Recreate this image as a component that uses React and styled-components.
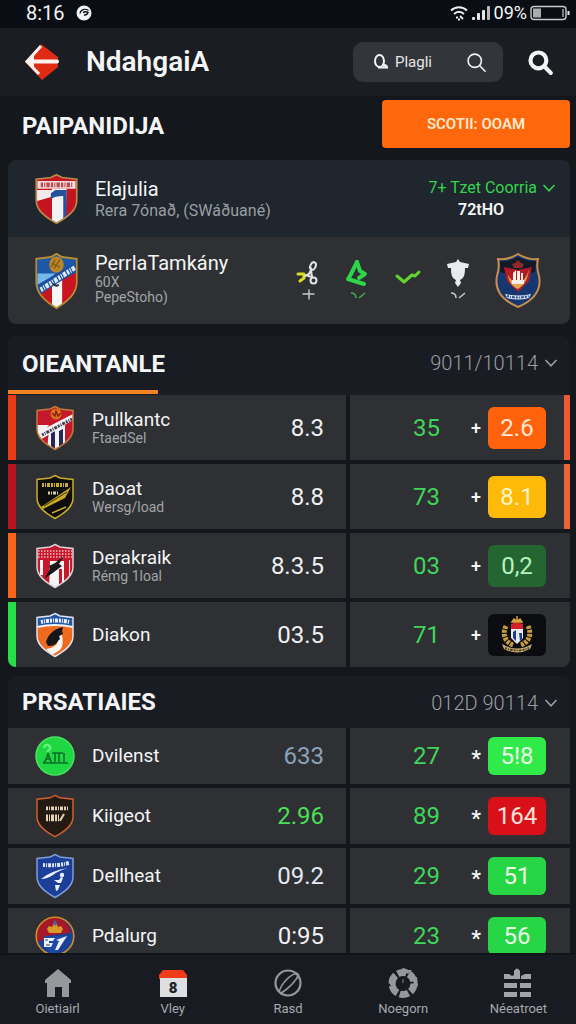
import React from "react";
import styled, { createGlobalStyle, css } from "styled-components";

const GlobalStyle = createGlobalStyle`
  * { box-sizing: border-box; }
  body { margin: 0; background: #14171c; color: #f4f5f6; font-family: Roboto, "Liberation Sans", sans-serif; }
  h1, h2, p, ul { margin: 0; padding: 0; }
  ul { list-style: none; }
  button, input { font: inherit; color: inherit; border: 0; padding: 0; background: none; }
  button { cursor: pointer; }
  svg { display: block; flex: none; }
`;

const Screen = styled.div`
  display: flex;
  flex-direction: column;
  height: 100vh;
`;

const StatusBar = styled.div`
  display: flex;
  align-items: center;
  height: 28px;
  flex: none;
  padding: 0 6px 2px 26px;
  background: #0a0d13;
  font-size: 20px;
  line-height: 24px;
`;

const StatusGroup = styled.div`
  display: flex;
  align-items: center;
  gap: ${(p) => p.$gap}px;
  margin-left: ${(p) => (p.$end ? "auto" : "0")};
`;

const Percent = styled.span`
  font-size: 18px;
`;

const Header = styled.header`
  display: flex;
  align-items: center;
  height: 69px;
  flex: none;
  padding: 0 23px 0 24px;
  background: #1a1d22;
  border-bottom: 1px solid #121418;
`;

const BackLink = styled.a`
  display: block;
  margin-right: 26px;
`;

const AppTitle = styled.h1`
  flex: 1;
  font-size: 28px;
  line-height: 32px;
  font-weight: 600;
`;

const SearchField = styled.label`
  display: flex;
  align-items: center;
  width: 150px;
  height: 40px;
  padding: 0 16px 0 20px;
  gap: 6px;
  border-radius: 10px;
  background: #33353a;
`;

const SearchInput = styled.input`
  flex: 1;
  min-width: 0;
  font-size: 15px;
  line-height: 20px;
  outline: none;
  &::placeholder { color: #e6e7e9; opacity: 1; }
`;

const IconButton = styled.button`
  margin-left: 25px;
`;

const Main = styled.main`
  flex: 1;
  min-height: 0;
  overflow-y: auto;
  scrollbar-width: none;
  padding: 0 6px 0 8px;
`;

const TitleBar = styled.div`
  display: flex;
  align-items: center;
  justify-content: space-between;
  height: 54px;
  margin-bottom: 9px;
  padding-left: 14px;
`;

const SectionTitle = styled.h2`
  padding-top: 3px;
  font-size: 24px;
  line-height: 28px;
  font-weight: 700;
`;

const ActionButton = styled.button`
  width: 188px;
  height: 48px;
  border-radius: 4px;
  background: #ff670c;
  color: #ffe9cf;
  font-size: 15px;
  font-weight: 600;
`;

const Card = styled.section`
  margin-bottom: 12px;
  border-radius: 8px;
  overflow: hidden;
`;

const MatchRow = styled.div`
  display: flex;
  align-items: center;
  gap: 16px;
  height: ${(p) => (p.$tall ? 87 : 77)}px;
  padding: 0 14px 0 26px;
  background: ${(p) => (p.$tall ? "#2e3034" : "#1f262d")};
  ${(p) => p.$tall && css`padding-right: 29px;`}
`;

const TeamText = styled.div`
  flex: 1;
  min-width: 0;
  padding-bottom: ${(p) => (p.$raised ? 6 : 0)}px;
`;

const CardName = styled.p`
  font-size: 20px;
  line-height: 24px;
`;

const CardNote = styled.p`
  font-size: 16px;
  line-height: 20px;
  color: #9a9ea3;
`;

const SmallNote = styled.p`
  font-size: 14px;
  line-height: 15px;
  color: #a2a4a8;
`;

const Meta = styled.div`
  display: flex;
  flex-direction: column;
  align-items: flex-end;
`;

const MetaButton = styled.button`
  display: flex;
  align-items: center;
  gap: 5px;
  font-size: 16px;
  line-height: 22px;
  color: #35d450;
`;

const MetaValue = styled.p`
  padding-right: 52px;
  font-size: 16px;
  line-height: 22px;
  font-weight: 600;
`;

const EventList = styled.ul`
  display: flex;
  margin-right: -4px;
`;

const EventItem = styled.li`
  display: flex;
  justify-content: center;
  width: 50px;
`;

const Section = styled.section`
  margin-bottom: 9px;
  border-radius: 8px;
  overflow: hidden;
`;

const SectionHead = styled.div`
  display: flex;
  justify-content: space-between;
  height: ${(p) => (p.$active ? 59 : 52)}px;
  padding: 0 12px 0 0;
  background: #191c23;
`;

const TitleTab = styled.div`
  width: 150px;
  white-space: nowrap;
  padding: ${(p) => (p.$active ? 11 : 9)}px 0 0 14px;
  ${(p) => p.$active && css`
    border-bottom: 4px solid #f28222;
    margin-bottom: 1px;
  `}
`;

const DateButton = styled.button`
  display: flex;
  align-items: center;
  gap: 6px;
  height: 54px;
  font-size: 20px;
  font-weight: 300;
  color: #9c9ea3;
`;

const Table = styled.table`
  display: block;
`;

const Rows = styled.tbody`
  display: grid;
  gap: 4px;
`;

const Row = styled.tr`
  display: grid;
  grid-template-columns: minmax(0, 1fr) 84px 94px 44px 86px;
  height: ${(p) => (p.$tall ? 65 : 56)}px;
`;

const Cell = styled.td`
  display: flex;
  align-items: center;
  padding: 0;
  background: #2e3034;
  font-size: 24px;
  line-height: 28px;
`;

const TeamCell = styled(Cell)`
  gap: 17px;
  padding-left: ${(p) => (p.$bar ? 19 : 27)}px;
  ${(p) => p.$bar && css`border-left: 8px solid ${p.$bar};`}
`;

const ValueCell = styled(Cell)`
  justify-content: flex-end;
  padding-right: 22px;
  color: ${(p) => p.$color || "#f0f1f2"};
`;

const CountCell = styled(Cell)`
  justify-content: flex-end;
  margin-left: 4px;
  color: #3fd65a;
`;

const SignCell = styled(Cell)`
  justify-content: flex-end;
  padding: ${(p) => (p.$low ? 6 : 0)}px 3px 0 0;
  font-size: ${(p) => (p.$low ? 22 : 18)}px;
  font-weight: 500;
`;

const BadgeCell = styled(Cell)`
  padding-left: 4px;
  ${(p) => p.$bar && css`border-right: 6px solid ${p.$bar};`}
`;

const Badge = styled.span`
  display: flex;
  align-items: center;
  justify-content: center;
  width: 58px;
  height: ${(p) => (p.$tall ? 42 : 38)}px;
  border-radius: 6px;
  background: ${(p) => p.$color};
  color: ${(p) => p.$ink || "#eafbe6"};
`;

const TeamName = styled.p`
  font-size: 19px;
  line-height: 22px;
`;

const TabBar = styled.nav`
  display: grid;
  grid-template-columns: repeat(5, 1fr);
  flex: none;
  height: 71px;
  border-top: 2px solid #111419;
  background: #181b21;
`;

const Tab = styled.a`
  display: flex;
  flex-direction: column;
  align-items: center;
  gap: 2px;
  padding-top: 13px;
  font-size: 13px;
  line-height: 18px;
  color: #a6a9ad;
  text-decoration: none;
`;

const TabIcon = styled.span`
  display: flex;
  align-items: center;
  height: 30px;
`;

/* ---------- icons ---------- */

const Chevron = ({ color = "currentColor" }) => (
  <svg width="14" height="10" viewBox="0 0 14 10" fill="none" stroke={color} strokeWidth="1.6">
    <path d="M1.5 2 7 7.800 12.500 2" />
  </svg>
);

const SearchIcon = ({ size, weight }) => (
  <svg width={size} height={size} viewBox="0 0 24 24" fill="none" stroke="currentColor" strokeWidth={weight} strokeLinecap="round">
    <circle cx="10" cy="10" r="7.600" />
    <path d="m15.800 15.800 6 6.200" />
  </svg>
);

const StatusIcon = () => (
  <svg width="16" height="18" viewBox="0 0 16 18">
    <circle cx="8" cy="9" r="7.500" fill="#f2f3f4" />
    <path d="M12.500 6.500C9 4 4.500 5.500 4 9.500" fill="none" stroke="#0a0d13" strokeWidth="1.200" />
    <path d="M7 8.500q3-1.500 5 0-1 3-4 2.500" fill="none" stroke="#0a0d13" strokeWidth="1.400" />
  </svg>
);

const Wifi = () => (
  <svg width="18" height="16" viewBox="0 0 18 16" fill="none" stroke="#eceded">
    <path d="M1 5.500C5.500 1 12.500 1 17 5.500" strokeWidth="2" />
    <path d="M4 9c3-3 7-3 10 0" strokeWidth="1.800" />
    <path d="M6 12.500h2M10 11l3 3M8 14.500h2" strokeWidth="1.800" />
  </svg>
);

const Signal = () => (
  <svg width="20" height="16" viewBox="0 0 20 16" fill="#e6e7e8">
    <rect x="1" y="12" width="3" height="3" rx="1" />
    <rect x="6" y="8" width="3" height="7" rx="1" />
    <rect x="11" y="5" width="3" height="10" rx="1" />
    <rect x="16" y="1" width="3" height="14" rx="1" fill="#b9babc" />
  </svg>
);

const Battery = () => (
  <svg width="40" height="16" viewBox="0 0 40 16">
    <rect x="1" y="1.500" width="35" height="13" rx="3" fill="#0a0d13" stroke="#c9cacc" strokeWidth="1.400" />
    <rect x="3" y="3.500" width="8" height="9" fill="#a9abad" />
    <path d="M33 4v8" stroke="#c9cacc" strokeWidth="1.200" />
    <path d="M38.500 6v4" stroke="#e6e7e8" strokeWidth="2" />
  </svg>
);

const BackLogo = () => (
  <svg width="36" height="38" viewBox="0 0 36 38">
    <path d="M17 1 34 14v10L18 37 1 19Z" fill="#e02a14" />
    <path d="M33 18.500H8" fill="none" stroke="#fff3ee" strokeWidth="4" strokeLinecap="round" />
    <path d="M17 3 3 18.500 15 31" fill="none" stroke="#fff3ee" strokeWidth="3" />
    <path d="M1 18.500 10 12v13Z" fill="#fff3ee" />
  </svg>
);

const QueryMark = () => (
  <svg width="16" height="18" viewBox="0 0 16 18" fill="none" stroke="#f3f4f5">
    <ellipse cx="6.500" cy="8" rx="4.500" ry="6" strokeWidth="2" />
    <path d="M5 14.500h9c0-2-2-3-4-2" strokeWidth="2.200" />
  </svg>
);

const Injury = () => (
  <svg width="26" height="44" viewBox="0 0 26 44" fill="none" strokeLinecap="round">
    <path d="M3 15h6v4l-4 3" stroke="#d9dc25" strokeWidth="3" strokeLinejoin="round" />
    <ellipse cx="18" cy="7" rx="2.600" ry="4" stroke="#e2e3e5" strokeWidth="2" transform="rotate(25 18 7)" />
    <path d="m10 17 4-2 2-4 1 7-4-1" stroke="#e2e3e5" strokeWidth="2" />
    <circle cx="18.500" cy="21.500" r="3" stroke="#e2e3e5" strokeWidth="2" />
    <path d="M8 35h11M14 31v9" stroke="#c8cacc" strokeWidth="1.400" />
  </svg>
);

const Marks = ({ color }) => (
  <g fill="none" stroke={color} strokeWidth="1.600">
    <path d="M6 34c3 0 5 2 5 5M20 34l-6 5" />
  </g>
);

const Boot = () => (
  <svg width="26" height="44" viewBox="0 0 26 44">
    <path d="M12 3 5 17l-2 3 16 5" fill="none" stroke="#2fd64b" strokeWidth="4" strokeLinejoin="round" strokeLinecap="round" />
    <path d="M12 3l3 9 5 3-6 4" fill="none" stroke="#2fd64b" strokeWidth="4" strokeLinejoin="round" strokeLinecap="round" />
    <Marks color="#3fae52" />
  </svg>
);

const Tick = () => (
  <svg width="26" height="44" viewBox="0 0 26 44" fill="none" stroke="#62d52c" strokeWidth="3" strokeLinecap="round" strokeLinejoin="round">
    <path d="m2 17 7 6 8-7 3 1 4-4" />
  </svg>
);

const Trophy = () => (
  <svg width="26" height="44" viewBox="0 0 26 44">
    <path d="M13 0l2 3 9 2-1 4h-3c0 7-1 10-5 12l1 3-3 4-3-4 1-3c-4-2-5-5-5-12H3L2 5l9-2Z" fill="#e9eaeb" />
    <Marks color="#c4c6c8" />
  </svg>
);

const HomeIcon = () => (
  <svg width="28" height="28" viewBox="0 0 28 28" fill="#96999c">
    <path d="M14 0 27 11v3h-2v14h-7V18h-7v10H3V14H1v-3Z" />
  </svg>
);

const CalendarIcon = () => (
  <svg width="30" height="28" viewBox="0 0 30 28">
    <path d="M5 1h20l4 5v4H1V6Z" fill="#f03a1a" />
    <path d="M2 9h27v19H2Z" fill="#dddfe1" />
    <text x="15" y="24" textAnchor="middle" fontFamily="Roboto, sans-serif" fontWeight="900" fontSize="15" fill="#20242a">8</text>
  </svg>
);

const LeafIcon = () => (
  <svg width="28" height="28" viewBox="0 0 28 28" fill="none" stroke="#96999c">
    <circle cx="14" cy="14" r="12.500" strokeWidth="2.200" />
    <path d="M24 4C17 5 8 13 5 23" strokeWidth="1.400" />
    <path d="M25 5Q21 15 6 25" strokeWidth="1.800" />
  </svg>
);

const BallIcon = () => (
  <svg width="32" height="30" viewBox="0 0 32 30">
    <circle cx="16" cy="15.500" r="11" fill="none" stroke="#96999c" strokeWidth="7" strokeDasharray="9 2.500" />
    <path d="m14 1 3-1 4 2h4l-4 4ZM2 15l3-4 4 5-3 5ZM30 9l1 9-4 1-1-9Z" fill="#96999c" />
    <path d="M16 11v4" stroke="#5c6065" strokeWidth="1.500" />
  </svg>
);

const GridIcon = () => (
  <svg width="28" height="30" viewBox="0 0 28 30" fill="#a2a4a7">
    <path d="M0 6h5l3 2 2-1V3q3-5 6 0v8H0ZM17 8l4-2h6v5H17ZM0 15h13v5H0ZM16 15h11v5H16ZM0 24h13v5H0ZM16 24h11v5H16Z" />
  </svg>
);

/* ---------- club crests ---------- */

const SHIELD = "M20 1.500 25 4l13 1.500V24c0 9-8 15-18 20.500C10 39 2 33 2 24V5.500L15 4Z";

const Shield = ({ id, width = 40, height = 46, edge, children }) => (
  <svg width={width} height={height} viewBox="0 0 40 46" preserveAspectRatio="none">
    <clipPath id={id}><path d={SHIELD} /></clipPath>
    <g clipPath={`url(#${id})`}>{children}</g>
    <path d={SHIELD} fill="none" stroke={edge} strokeWidth="1.500" />
  </svg>
);

const Lettering = ({ d, color, width = 3 }) => (
  <path d={d} fill="none" stroke={color} strokeWidth={width} strokeDasharray="2 1 1 1 3 1" />
);

const Wreath = () => (
  <svg width="34" height="38" viewBox="0 0 34 38">
    <path d="M6 10c-4 8-1 16 7 19M28 10c4 8 1 16-7 19" fill="none" stroke="#c79a3c" strokeWidth="5" strokeDasharray="3 1" />
    <path d="M11 10q6-4 12 0v12l-6 6-6-6Z" fill="#e8e9ec" />
    <path d="M11 8q6-3 12 0v5H11Z" fill="#d3202a" />
    <path d="M13 16l3-2v11l-3-3ZM19 17h3v6l-2 2Z" fill="#1d3f86" />
    <path d="M12 6l2-3 3 2 3-2 2 3ZM17 0v5" fill="#d9a53c" stroke="#d9a53c" strokeWidth="1.500" />
    <path d="M2 28q15 9 30 0l-2 5q-13 7-26 0Z" fill="#cdb37a" />
    <Lettering d="M5 32q12 5 24 0" color="#4c3b1c" width={2} />
  </svg>
);

const crests = {
  elajulia: (
    <Shield id="c-ela" width={45} height={52} edge="#b98a4c">
      <path d="M0 0h40v46H0Z" fill="#c4141f" />
      <path d="M2 15h14v6L2 25Z" fill="#f2e9ea" />
      <path d="M16 14h13l-1 32H16Z" fill="#f3f3f6" />
      <path d="M15 18l4-3h10v5l-10 1-4 2ZM26 18l3-2v26l-3 2Z" fill="#24529c" />
      <path d="M3 7h34v7H3Z" fill="#f5dddd" />
      <Lettering d="M6 10.500h28" color="#bb4a50" width={4} />
    </Shield>
  ),
  tamkany: (
    <Shield id="c-tam" width={45} height={58} edge="#b88d34">
      <path d="M0 0h40v46H0Z" fill="#1d57a8" />
      <path d="M3 17h16L3 30Z" fill="#76b9e8" />
      <path d="M2 33 38 16v30H2Z" fill="#c8151f" />
      <path d="M16 25l9-5v26h-9Z" fill="#f5f5f6" />
      <circle cx="20" cy="10" r="6.500" fill="#b98425" />
      <path d="m16 9 7 3M18 13l5-7M15 12l4-6" stroke="#7d591b" strokeWidth="1" />
      <path d="m3 26 35-18v7L5 34Z" fill="#1c4f9f" />
      <Lettering d="m6 30 31-18" color="#dce8f5" width={4} />
      <path d="M17 25q2 3 5 1" stroke="#27262a" fill="none" strokeWidth="1.500" />
    </Shield>
  ),
  guest: (
    <svg width="46" height="55" viewBox="0 0 46 55">
      <path d="M23 1q9 6 20 5-2 8 1 17c3 15-7 25-21 31C9 48-1 38 2 23q3-9 1-17Q14 7 23 1Z" fill="#15366f" stroke="#c78e4d" strokeWidth="2" />
      <path d="M5 8q10 1 18-4 8 5 18 4l-1 11-17 5L5 19Z" fill="#151827" />
      <path d="m9 14 14 3 14-3-3 14-11 11-11-11Z" fill="#b21c25" />
      <path d="m17 11 3-1 3-3 3 3 3 1-2 4h-8Z" fill="#8c2a28" />
      <path d="M13 22c1 8 5 12 10 14 7-4 10-11 11-20-2 8-6 13-11 15-4-1-7-4-10-9Z" fill="#e1a44f" />
      <path d="M17 27h12v4H17ZM18 20l3-3v11h-3ZM22 18h3v12h-3ZM26 20h2v9h-2Z" fill="#f4eee6" />
      <path d="M10 41q13 3 26 0l-2 4q-11 3-22 0Z" fill="#dfe7f3" />
      <Lettering d="M12 43q11 3 22 0" color="#2c4f93" width={2} />
    </svg>
  ),
  pullkanta: (
    <Shield id="c-pul" edge="#c07a3c">
      <path d="M0 0h40v46H0Z" fill="#c5182a" />
      <path d="M0 20h14L3 34Z" fill="#f3eff0" />
      <path d="M14 24 30 18v28H12Z" fill="#f2f2f4" />
      <path d="M16 28l4-2v18l-4-3ZM24 26l4-2v17l-4 3Z" fill="#262a52" />
      <circle cx="21" cy="9" r="5.500" fill="#d7731b" />
      <path d="m17 8 3 3 1-5 2 5 3-3" fill="none" stroke="#8c1b18" strokeWidth="1.300" />
      <path d="m3 27 35-18v6L5 35Z" fill="#f6f2f3" />
      <Lettering d="m7 30 30-16" color="#444356" width={3} />
    </Shield>
  ),
  daoat: (
    <Shield id="c-dao" edge="#c9ad28">
      <path d="M0 0h40v46H0Z" fill="#0c0d0c" />
      <Lettering d="M7 11h27" color="#c9ad28" width={4} />
      <path d="m6 33 30-20-6 11L8 35Z" fill="#c9a71e" />
      <path d="m9 32 23-14" stroke="#3a320c" strokeWidth="1" />
      <Lettering d="M13 19h10" color="#d7d0a0" width={3} />
      <path d="m17 39 14-6" stroke="#c9ad28" strokeWidth="1.500" />
    </Shield>
  ),
  derakraik: (
    <Shield id="c-der" edge="#d9d3d8">
      <path d="M0 0h40v46H0Z" fill="#c8172a" />
      <path d="M3 8h34M3 11h34M3 14h34" stroke="#efc0c4" strokeWidth="1.500" strokeDasharray="1.500 1.500" />
      <path d="M15 18h14v28H14ZM5 17h3v15H5ZM34 17h1v17h-1Z" fill="#f6f3f4" />
      <path d="M24 26h3v16h-3Z" fill="#c8172a" />
      <path d="m29 13-5 8 3 2-8 6-10 7 6-10-1-3 6-3Z" fill="#17161b" />
    </Shield>
  ),
  diakon: (
    <Shield id="c-dia" edge="#dfe3ee">
      <path d="M0 0h40v46H0Z" fill="#ee6a1f" />
      <path d="M0 0h40v15Q20 11 0 15Z" fill="#2456a8" />
      <Lettering d="M6 10q14-3 28 0" color="#edf2fa" width={4} />
      <path d="M2 15q18-4 36 0" fill="none" stroke="#f6f3f2" strokeWidth="2" />
      <path d="M26 20q4 12-1 18l-8 5-6-6q11-1 12-9Z" fill="#faf3ee" />
      <path d="M28 15c-10 2-15 8-17 15l2 4q8 0 10-5l2-2-1-3 4-2-1-3Z" fill="#16151a" />
    </Shield>
  ),
  dvilenst: (
    <svg width="40" height="40" viewBox="0 0 40 40">
      <circle cx="20" cy="20" r="19" fill="#1ed742" stroke="#4ce066" strokeWidth="1.500" />
      <path d="M9 12q1-4 4-3 3 1 2 4l-3 3" fill="none" stroke="#6df080" strokeWidth="2.200" />
      <path d="M8 27q3-1 5-10 2 8 4 10M11 23h5M17 17h7M20 17v9M24 26v-9h4M29 17v9M8 27h25" fill="none" stroke="#0c6f26" strokeWidth="1.600" />
    </svg>
  ),
  kiigeot: (
    <Shield id="c-kii" height={44} edge="#d0602c">
      <path d="M0 0h40v46H0Z" fill="#231a13" />
      <Lettering d="M11 15h22" color="#e3d3b4" width={4} />
      <Lettering d="M11 25h14" color="#e3d3b4" width={7} />
      <path d="m25 28 4-7" stroke="#e3d3b4" strokeWidth="2" />
    </Shield>
  ),
  dellheat: (
    <Shield id="c-del" edge="#7f9cd8">
      <path d="M0 0h40v46H0Z" fill="#1b3f98" />
      <Lettering d="M8 12q14 1 26-2" color="#dbe5f8" width={4} />
      <path d="M6 26q9-8 27-11-10 3-15 7-6 4-12 4Z" fill="#e9effa" />
      <circle cx="27" cy="22" r="2.200" fill="#e9effa" />
      <path d="m26 24 2 1-2 5h-3l-4-3h5ZM20 32h5l-2 5-2 1Z" fill="#e9effa" />
    </Shield>
  ),
  pdalurg: (
    <svg width="40" height="40" viewBox="0 0 40 40">
      <circle cx="20" cy="20" r="19" fill="#1a3f96" />
      <path d="M20 1a19 19 0 0 0-18 25l8-3V20l26-3A19 19 0 0 0 20 1Z" fill="#a81727" />
      <path d="M9 20h25L20 39Q9 34 9 20Z" fill="#1d48a8" />
      <path d="M12 13l2-3 3 1 3-6 3 6 3-1 2 3-2 4H14Z" fill="#d99a2c" />
      <path d="M18 7l2-3 2 3-2 3Z" fill="#3866b6" />
      <path d="M9 22h11l-2 3h-4v2h4l-2 4H9ZM21 24l11-4-9 14h-3l4-9Z" fill="#eef1f8" />
      <path d="M10 24h3M11 29h4" stroke="#1d48a8" strokeWidth="1.200" />
      <circle cx="20" cy="20" r="18.800" fill="none" stroke="#cf8f2a" strokeWidth="1.600" />
    </svg>
  ),
};

/* ---------- data ---------- */

const standings = [
  { crest: "pullkanta", name: "Pullkantc", note: "FtaedSel", value: "8.3", count: "35", badge: "2.6", color: "#ff620b", ink: "#ffe6d2", bar: "#ea3a18", edge: "#ec5a34" },
  { crest: "daoat", name: "Daoat", note: "Wersg/load", value: "8.8", count: "73", badge: "8.1", color: "#ffb908", ink: "#fff6c4", bar: "#b5151f", edge: "#ec6438" },
  { crest: "derakraik", name: "Derakraik", note: "Rémg 1loal", value: "8.3.5", count: "03", badge: "0,2", color: "#256532", ink: "#b4f5bb", bar: "#f8641a" },
  { crest: "diakon", name: "Diakon", value: "03.5", count: "71", color: "#0a0c10", bar: "#26e04a" },
];

const results = [
  { crest: "dvilenst", name: "Dvilenst", value: "633", tint: "#8ba3b9", count: "27", badge: "5!8", color: "#30ea4a" },
  { crest: "kiigeot", name: "Kiigeot", value: "2.96", tint: "#4bdf58", count: "89", badge: "164", color: "#da1019", ink: "#ffe3df" },
  { crest: "dellheat", name: "Dellheat", value: "09.2", tint: "#e2e9f3", count: "29", badge: "51", color: "#27d645" },
  { crest: "pdalurg", name: "Pdalurg", value: "0:95", count: "23", badge: "56", color: "#27d645" },
];

const tabs = [
  { label: "Oietiairl", icon: <HomeIcon /> },
  { label: "Vley", icon: <CalendarIcon /> },
  { label: "Rasd", icon: <LeafIcon /> },
  { label: "Noegorn", icon: <BallIcon /> },
  { label: "Néeatroet", icon: <GridIcon /> },
];

const ScoreTable = ({ rows, tall, sign }) => (
  <Table>
    <Rows>
      {rows.map((r) => (
        <Row key={r.name} $tall={tall}>
          <TeamCell $bar={r.bar}>
            {crests[r.crest]}
            <TeamText>
              <TeamName>{r.name}</TeamName>
              {r.note && <SmallNote>{r.note}</SmallNote>}
            </TeamText>
          </TeamCell>
          <ValueCell $color={r.tint}>{r.value}</ValueCell>
          <CountCell>{r.count}</CountCell>
          <SignCell $low={sign === "*"}>{sign}</SignCell>
          <BadgeCell $bar={r.edge}>
            <Badge $tall={tall} $color={r.color} $ink={r.ink}>{r.badge || <Wreath />}</Badge>
          </BadgeCell>
        </Row>
      ))}
    </Rows>
  </Table>
);

export default function App() {
  return (
    <Screen>
      <GlobalStyle />
      <StatusBar>
        <StatusGroup $gap={11}>
          <span>8:16</span>
          <StatusIcon />
        </StatusGroup>
        <StatusGroup $gap={3} $end>
          <Wifi />
          <Signal />
          <Percent>09%</Percent>
          <Battery />
        </StatusGroup>
      </StatusBar>
      <Header>
        <BackLink href="#back" aria-label="Back"><BackLogo /></BackLink>
        <AppTitle>NdahgaiA</AppTitle>
        <SearchField>
          <QueryMark />
          <SearchInput type="text" placeholder="Plagli" />
          <SearchIcon size={21} weight={1.8} />
        </SearchField>
        <IconButton type="button" aria-label="Search"><SearchIcon size={25} weight={4} /></IconButton>
      </Header>
      <Main>
        <TitleBar>
          <SectionTitle>PAIPANIDIJA</SectionTitle>
          <ActionButton type="button">SCOTII: OOAM</ActionButton>
        </TitleBar>
        <Card>
          <MatchRow>
            {crests.elajulia}
            <TeamText>
              <CardName>Elajulia</CardName>
              <CardNote>Rera 7ónað, (SWáðuané)</CardNote>
            </TeamText>
            <Meta>
              <MetaButton type="button">7+ Tzet Coorria <Chevron /></MetaButton>
              <MetaValue>72tHO</MetaValue>
            </Meta>
          </MatchRow>
          <MatchRow $tall>
            {crests.tamkany}
            <TeamText $raised>
              <CardName>PerrlaTamkány</CardName>
              <SmallNote>60X</SmallNote>
              <SmallNote>PepeStoho)</SmallNote>
            </TeamText>
            <EventList>
              <EventItem><Injury /></EventItem>
              <EventItem><Boot /></EventItem>
              <EventItem><Tick /></EventItem>
              <EventItem><Trophy /></EventItem>
            </EventList>
            {crests.guest}
          </MatchRow>
        </Card>
        <Section>
          <SectionHead $active>
            <TitleTab $active><SectionTitle>OIEANTANLE</SectionTitle></TitleTab>
            <DateButton type="button">9011/10114 <Chevron /></DateButton>
          </SectionHead>
          <ScoreTable rows={standings} sign="+" tall />
        </Section>
        <Section>
          <SectionHead>
            <TitleTab><SectionTitle>PRSATIAIES</SectionTitle></TitleTab>
            <DateButton type="button">012D 90114 <Chevron /></DateButton>
          </SectionHead>
          <ScoreTable rows={results} sign="*" />
        </Section>
      </Main>
      <TabBar>
        {tabs.map((t) => (
          <Tab key={t.label} href={`#${t.label}`}>
            <TabIcon>{t.icon}</TabIcon>
            {t.label}
          </Tab>
        ))}
      </TabBar>
    </Screen>
  );
}
